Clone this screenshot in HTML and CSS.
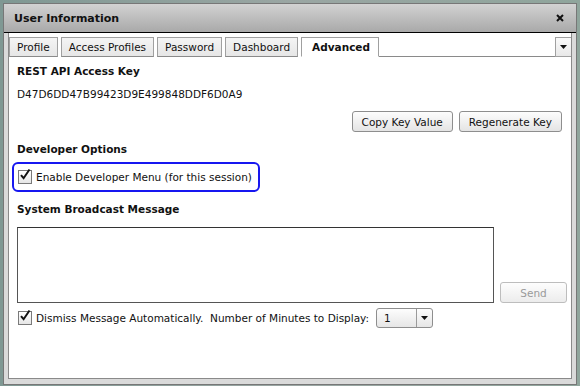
FILE: index.html
```html
<!DOCTYPE html>
<html lang="en">
<head>
    <meta charset="UTF-8">
    <title>User Information</title>
    <link rel="stylesheet" href="styles.css">
</head>
<body>
    <div class="dialog">
        <div class="titlebar">
            <span class="title">User Information</span>
            <span class="close">
                <svg width="8" height="8" viewBox="0 0 8 8"><path d="M1 1l6 6M7 1L1 7" stroke="#111" stroke-width="2"/></svg>
            </span>
        </div>
        <div class="dialogBody">
            <div class="panel">
                <div class="tabs">
                    <div class="tab">Profile</div>
                    <div class="tab">Access Profiles</div>
                    <div class="tab">Password</div>
                    <div class="tab">Dashboard</div>
                    <div class="tab active">Advanced</div>
                    <div class="tabFill"></div>
                    <div class="tabMenu">
                        <svg width="7" height="4" viewBox="0 0 7 4"><path d="M0 0h7L3.5 4z" fill="#111"/></svg>
                    </div>
                </div>

                <div class="content">
                    <div class="sectionTitle first">REST API Access Key</div>
                    <div class="keyValue">D47D6DD47B99423D9E499848DDF6D0A9</div>
                    <div class="keyActions">
                        <button class="btn">Copy Key Value</button>
                        <button class="btn">Regenerate Key</button>
                    </div>

                    <div class="sectionTitle">Developer Options</div>
                    <div class="devToggle">
                        <span class="check">
                            <svg width="14" height="14" viewBox="0 0 14 14"><path d="M3 7.2l2.6 3L11.5 1.5" fill="none" stroke="#111" stroke-width="2"/></svg>
                        </span>
                        <span>Enable Developer Menu (for this session)</span>
                    </div>

                    <div class="sectionTitle">System Broadcast Message</div>
                    <div class="broadcast">
                        <div class="messageBox"></div>
                        <button class="btn send" disabled>Send</button>
                    </div>

                    <div class="dismissRow">
                        <span class="check">
                            <svg width="14" height="14" viewBox="0 0 14 14"><path d="M3 7.2l2.6 3L11.5 1.5" fill="none" stroke="#111" stroke-width="2"/></svg>
                        </span>
                        <span class="dismissText">Dismiss Message Automatically.&nbsp; Number of Minutes to Display:</span>
                        <div class="select">
                            <span class="selectValue">1</span>
                            <span class="selectArrow">
                                <svg width="7" height="4" viewBox="0 0 7 4"><path d="M0 0h7L3.5 4z" fill="#111"/></svg>
                            </span>
                        </div>
                    </div>
                </div>
            </div>
        </div>
    </div>
</body>
</html>
```

FILE: styles.css
```css
body {
    margin: 0;
    padding: 3px;
    background: linear-gradient(90deg, #7f9893 0%, #9aa6a3 50%, #8fa59c 100%);
    font-family: 'DejaVu Sans', Verdana, sans-serif;
    font-size: 10.5px;
    color: #111;
}

.dialog {
    width: 572px;
    height: 380px;
    border: 1px solid #777;
    background-color: #dadada;
    display: flex;
    flex-direction: column;
}

.titlebar {
    height: 28px;
    border-bottom: 1px solid #000;
    background: linear-gradient(#d2d2d2, #a9a9a9);
    display: flex;
    align-items: center;
    justify-content: space-between;
    padding: 0 12px 0 10px;
}

.title {
    font-weight: bold;
    font-size: 11px;
}

.close {
    display: flex;
    margin-top: -1px;
}

.dialogBody {
    flex: 1;
    padding: 0 5px 5px 4px;
    display: flex;
}

.panel {
    flex: 1;
    background-color: #fff;
    border: 1px solid #8a8a8a;
    border-top: none;
    display: flex;
    flex-direction: column;
}

.tabs {
    display: flex;
    align-items: flex-end;
    padding-top: 4px;
    height: 20px;
}

.tab {
    height: 18px;
    line-height: 18px;
    padding: 0 7px;
    margin-left: 3px;
    border: 1px solid #a0a0a0;
    border-bottom: 1px solid #8a8a8a;
    background: linear-gradient(#f4f4f4, #e6e6e6);
}

.tab:first-child {
    margin-left: 0;
}

.tab.active {
    background: #fff;
    border-bottom-color: #fff;
    font-weight: bold;
    padding: 0 8px 0 10px;
}

.tabFill {
    flex: 1;
    height: 0;
    border-bottom: 1px solid #8a8a8a;
}

.tabMenu {
    width: 15px;
    height: 18px;
    border: 1px solid #a0a0a0;
    border-right: none;
    background: linear-gradient(#fafafa, #e8e8e8);
    display: flex;
    align-items: center;
    justify-content: center;
    align-self: flex-start;
}

.content {
    padding: 0 9px 0 8px;
}

.sectionTitle {
    font-weight: bold;
    line-height: 14px;
    margin-top: 10px;
}

.sectionTitle.first {
    margin-top: 7px;
}

.keyValue {
    line-height: 14px;
    margin-top: 9px;
}

.keyActions {
    display: flex;
    justify-content: flex-end;
    gap: 6px;
    margin-top: 10px;
}

.btn {
    font-family: inherit;
    font-size: 10.5px;
    color: #111;
    height: 21px;
    padding: 0 9px;
    border: 1px solid #8e8e8e;
    border-radius: 3px;
    background: linear-gradient(#fdfdfd, #e4e4e4);
}

.devToggle {
    display: inline-flex;
    align-items: center;
    gap: 4px;
    margin: 6px 0 0 -5px;
    padding: 0 6px 0 4px;
    height: 26px;
    border: 2px solid #1717f0;
    border-radius: 6px;
}

.check {
    width: 12px;
    height: 12px;
    border: 1px solid #7a7a7a;
    background: linear-gradient(#fff, #e6e6e6);
    position: relative;
    flex-shrink: 0;
}

.check svg {
    position: absolute;
    left: -1px;
    top: -3px;
}

.broadcast {
    display: flex;
    align-items: flex-end;
    gap: 6px;
    margin-top: 11px;
}

.messageBox {
    width: 475px;
    height: 74px;
    border: 1px solid #555;
    border-top-color: #333;
}

.btn.send {
    width: 67px;
    margin-right: -5px;
    color: #9a9a9a;
    border-color: #bdbdbd;
    background: linear-gradient(#fdfdfd, #ececec);
}

.dismissRow {
    display: flex;
    align-items: center;
    margin-top: 5px;
    padding-left: 1px;
}

.dismissText {
    margin-left: 4px;
}

.select {
    display: flex;
    margin-left: 7px;
    height: 18px;
    border: 1px solid #8e8e8e;
    border-radius: 3px;
    background: linear-gradient(#fdfdfd, #e6e6e6);
}

.selectValue {
    width: 32px;
    padding-left: 7px;
    line-height: 18px;
    border-right: 1px solid #9a9a9a;
}

.selectArrow {
    width: 15px;
    display: flex;
    align-items: center;
    justify-content: center;
}
```
